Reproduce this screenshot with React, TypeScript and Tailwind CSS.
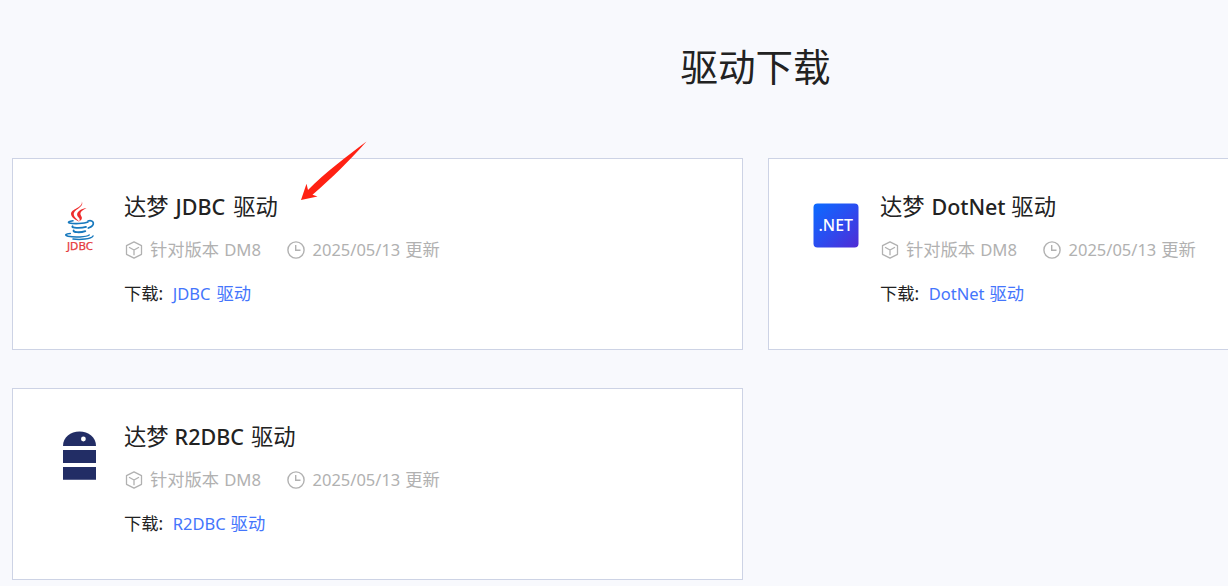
import type { ReactNode } from "react";

interface Driver {
  name: string;
  nameClass: string;
  linkClass: string;
  icon: ReactNode;
}

function JdbcLogo() {
  return (
    <svg width="34" height="52" viewBox="0 0 34 52" fill="none">
      <g fill="#ee2c2c">
        <path d="M18.8 1.500c2.800 5.800-8.300 7.700-8 13 .2 2.800 3.900 5 5.400 7.200-3.300-1.500-8.300-4.200-8.200-7.900C8.200 8.800 20.200 7.500 18.800 1.500Z" />
        <path d="M23.500 8.100c-3.500 1.800-6.800 3.800-5.900 6.700.6 1.600 2.200 2.700.7 4.900l-2.200 1.900c2.300-3.400-2.300-4.300-2-7.300.3-3.400 5.200-5.600 9.400-6.200Z" />
      </g>
      <g stroke="#1678bd" strokeLinecap="round">
        <path d="M10 20.800c-3.300.5-6 1.300-3.600 2.100 4.400 1.200 14.900.7 18.500-.8" strokeWidth="1.600" />
        <path d="M25 21c6-1.800 8 4.300.3 7" strokeWidth="1.700" />
        <path d="M9.500 26.300c-1.500 1.800 8 2.300 13.500.6M10.700 30.400c-1.400 1.900 6.300 2.600 11.600.7" strokeWidth="1.800" />
        <path d="M7.300 33.500c-4.600.3-6.300 1.800-2.300 2.700 6.600 1.400 18.300.9 21.200-1.200M10 39c7 .9 18.200.2 20-3" strokeWidth="1.500" />
      </g>
      <text x="4" y="50" textLength="26" lengthAdjust="spacingAndGlyphs" fill="#e5393c" stroke="#e5393c" strokeWidth=".25" className="font-['Noto_Sans',sans-serif] text-[10.500px]">
        JDBC
      </text>
    </svg>
  );
}

function DotNetLogo() {
  return (
    <svg width="46" height="46" viewBox="0 0 46 46">
      <defs>
        <linearGradient id="dotnet" x1="0" y1="0" x2="1" y2="1">
          <stop stopColor="#0b6bff" />
          <stop offset=".5" stopColor="#2b4df0" />
          <stop offset="1" stopColor="#512bd4" />
        </linearGradient>
      </defs>
      <rect x=".5" y=".5" width="45" height="44" rx="4" fill="url(#dotnet)" />
      <text x="5.500" y="28.300" textLength="34.500" lengthAdjust="spacingAndGlyphs" fill="white" className="font-['Noto_Sans',sans-serif] text-[16px] font-medium">
        .NET
      </text>
    </svg>
  );
}

function R2dbcLogo() {
  return (
    <svg width="33" height="50" viewBox="0 0 33 50" fill="#222d65">
      <path d="M0 15C0 6 7.500.5 16.500.5S33 6 33 15Z" />
      <path d="M0 19h33v13H0zM0 36h33v12.700H0z" />
      <circle cx="20.400" cy="8" r="2.400" fill="white" />
    </svg>
  );
}

function CubeIcon() {
  return (
    <svg width="18" height="18" viewBox="0 0 18 18" fill="none" stroke="#b1b1b1" strokeWidth="1.300" strokeLinejoin="round">
      <path d="M9 .8 16.500 4.700v8.600L9 17.200l-7.500-3.900V4.700ZM4 6.200 9 9l5-2.800M9 9v5.200" />
    </svg>
  );
}

function ClockIcon() {
  return (
    <svg width="18" height="18" viewBox="0 0 18 18" fill="none" stroke="#b1b1b1" strokeWidth="1.400">
      <circle cx="9" cy="9" r="8.100" />
      <path d="M8.700 4v5.300h4.800" />
    </svg>
  );
}

function Arrow() {
  return (
    <svg width="70" height="62" viewBox="0 0 70 62" fill="#ff2113" className="absolute left-[300px] top-[140px]">
      <path d="M66.500 1.500C49 21 32 38 12.500 54.700L17.500 56.500 1 60 6.500 43.700 8 50C26 32 47 16 66.500 1.500Z" />
    </svg>
  );
}

const drivers: Driver[] = [
  { name: "JDBC", nameClass: "pl-px pr-[2px]", linkClass: "pr-px", icon: <JdbcLogo /> },
  { name: "DotNet", nameClass: "pl-px tracking-[-0.1px]", linkClass: "", icon: <DotNetLogo /> },
  { name: "R2DBC", nameClass: "pr-px", linkClass: "", icon: <R2dbcLogo /> },
];

function DriverCard({ name, nameClass, linkClass, icon }: Driver) {
  return (
    <div className="flex h-48 border border-[#cdd3e5] bg-white pl-[43px]">
      <div className="mt-[41px] flex h-[52px] w-[47px] shrink-0 items-center justify-center">
        {icon}
      </div>
      <div className="ml-[21px] whitespace-nowrap pt-8">
        <h3 className="flex h-8 items-center gap-[6px] text-[22.300px]">
          <span>达梦</span>
          <span className={`text-[21.500px] font-medium ${nameClass}`}>{name}</span>
          <span>驱动</span>
        </h3>
        <div className="mt-[15px] flex h-6 items-center text-[17.300px] text-[#b1b1b1]">
          <span className="ml-px">
            <CubeIcon />
          </span>
          <span className="ml-[7px]">针对版本</span>
          <span className="ml-[5px] text-[16.700px]">DM8</span>
          <span className="ml-[26px]">
            <ClockIcon />
          </span>
          <span className="ml-[7.500px] text-[16.500px]">2025/05/13</span>
          <span className="ml-[5px]">更新</span>
        </div>
        <div className="mt-5 flex h-6 items-center text-[17.300px]">
          <span>下载:</span>
          <a href="#" className="ml-[9.500px] flex items-center gap-[5px] text-[#4475fc]">
            <span className={`text-[16.500px] ${linkClass}`}>{name}</span>
            <span>驱动</span>
          </a>
        </div>
      </div>
    </div>
  );
}

export default function App() {
  return (
    <div className="relative h-[586px] overflow-hidden bg-[#f8f9fd] font-['Noto_Sans','Noto_Sans_CJK_SC',sans-serif] text-[#222]">
      <div className="w-[1511px] px-3 pt-[39px]">
        <h2 className="text-center text-[37.500px] leading-[56px]">驱动下载</h2>
        <div className="mt-[63px] grid grid-cols-2 gap-x-[25px] gap-y-[38px]">
          {drivers.map((driver) => (
            <DriverCard key={driver.name} {...driver} />
          ))}
        </div>
      </div>
      <Arrow />
    </div>
  );
}
